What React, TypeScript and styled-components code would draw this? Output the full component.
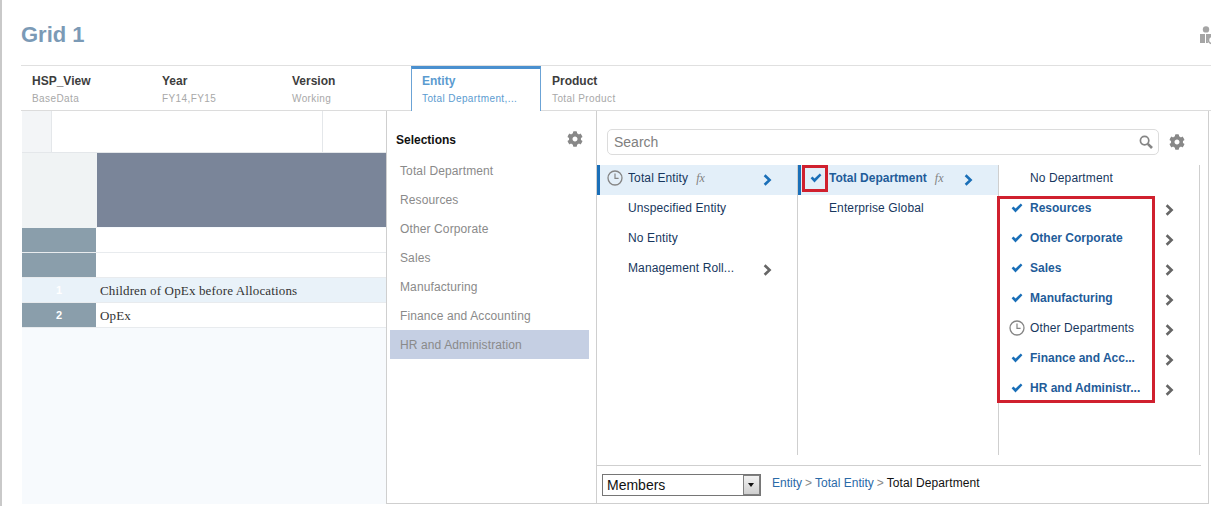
import React, { FC } from "react";
import { FaCog } from "react-icons/fa";
import styled, { createGlobalStyle } from "styled-components";

interface ITab {
  name: string;
  value: string;
  active?: boolean;
}

interface IMember {
  label: string;
  mark?: "check" | "clock";
  bold?: boolean;
  fx?: boolean;
  active?: boolean;
  more?: boolean;
  moreTone?: "blue" | "gray";
}

const tabs: ITab[] = [
  { name: "HSP_View", value: "BaseData" },
  { name: "Year", value: "FY14,FY15" },
  { name: "Version", value: "Working" },
  { name: "Entity", value: "Total Department,...", active: true },
  { name: "Product", value: "Total Product" },
];

const selections = [
  "Total Department",
  "Resources",
  "Other Corporate",
  "Sales",
  "Manufacturing",
  "Finance and Accounting",
  "HR and Administration",
];

const columns: IMember[][] = [
  [
    { label: "Total Entity", mark: "clock", fx: true, active: true, more: true, moreTone: "blue" },
    { label: "Unspecified Entity" },
    { label: "No Entity" },
    { label: "Management Roll...", more: true },
  ],
  [
    { label: "Total Department", mark: "check", bold: true, fx: true, active: true, more: true, moreTone: "blue" },
    { label: "Enterprise Global" },
  ],
  [
    { label: "No Department" },
    { label: "Resources", mark: "check", bold: true, more: true },
    { label: "Other Corporate", mark: "check", bold: true, more: true },
    { label: "Sales", mark: "check", bold: true, more: true },
    { label: "Manufacturing", mark: "check", bold: true, more: true },
    { label: "Other Departments", mark: "clock", more: true },
    { label: "Finance and Acc...", mark: "check", bold: true, more: true },
    { label: "HR and Administr...", mark: "check", bold: true, more: true },
  ],
];

const ClockIcon = () => (
  <svg width="16" height="16" viewBox="0 0 16 16" fill="none" stroke="#858585">
    <circle cx="8" cy="8" r="7" strokeWidth="1.3" />
    <path d="M8 3.6V8.4H11.6" strokeWidth="1.2" />
  </svg>
);

const CheckIcon = () => (
  <svg width="12" height="10" viewBox="0 0 12 10">
    <path d="M0.6 5.2L2.5 3.4L4.5 5.5L9.8 0.6L11.4 2.2L4.5 9.4Z" fill="#1a6fb8" />
  </svg>
);

const ChevronIcon: FC<{ tone: "blue" | "gray" }> = ({ tone }) => (
  <svg width="9" height="12" viewBox="0 0 9 12" fill="none">
    <path
      d="M1.6 1.2L6.6 6L1.6 10.8"
      stroke={tone === "blue" ? "#1a6fb8" : "#666"}
      strokeWidth="2.6"
    />
  </svg>
);

const SearchIcon = () => (
  <svg width="14" height="14" viewBox="0 0 14 14" fill="none" stroke="#858585">
    <circle cx="5.6" cy="5.6" r="4.2" strokeWidth="1.7" />
    <path d="M8.8 8.8L13 13" strokeWidth="2.6" />
  </svg>
);

const PersonIcon = () => (
  <svg width="16" height="20" viewBox="0 0 16 20" fill="#a5a5a5">
    <circle cx="6" cy="3.4" r="3.2" />
    <path d="M0 8H5V17H0Z" />
    <path d="M6 8H11V10.5C8.4 11.5 7.2 14 8 17H6Z" />
    <circle cx="12" cy="14" r="3.6" fill="none" stroke="#a5a5a5" strokeWidth="1.6" />
  </svg>
);

const MemberRow: FC<{ member: IMember }> = ({ member }) => (
  <Row $active={member.active}>
    <MarkCell>
      {member.mark === "check" && <CheckIcon />}
      {member.mark === "clock" && <ClockIcon />}
    </MarkCell>
    <RowLabel $bold={member.bold}>
      {member.label}
      {member.fx && <Fx>fx</Fx>}
    </RowLabel>
    {member.more && (
      <MoreCell>
        <ChevronIcon tone={member.moreTone ?? "gray"} />
      </MoreCell>
    )}
  </Row>
);

export default function App() {
  return (
    <>
      <GlobalStyle />
      <Page>
        <Header>
          <Title>Grid 1</Title>
          <PersonSlot>
            <PersonIcon />
          </PersonSlot>
        </Header>
        <TabBar>
          {tabs.map((tab) => (
            <Tab key={tab.name} $active={tab.active}>
              <TabName $active={tab.active}>{tab.name}</TabName>
              <TabValue $active={tab.active}>{tab.value}</TabValue>
            </Tab>
          ))}
        </TabBar>
        <Workspace>
          <GridArea>
            <TopRow>
              <CornerCell />
              <TopCell />
              <TopCell />
            </TopRow>
            <HeadRow>
              <HeadStub />
              <HeadBand />
            </HeadRow>
            <DataRow>
              <RowHead />
              <RowBody />
            </DataRow>
            <DataRow>
              <RowHead />
              <RowBody />
            </DataRow>
            <DataRow $tinted>
              <RowHead $tinted>1</RowHead>
              <RowBody>Children of OpEx before Allocations</RowBody>
            </DataRow>
            <DataRow>
              <RowHead>2</RowHead>
              <RowBody>OpEx</RowBody>
            </DataRow>
          </GridArea>
          <Panel>
            <SelectionColumn>
              <SelectionHead>
                <SelectionTitle>Selections</SelectionTitle>
                <FaCog size={16} color="#888" />
              </SelectionHead>
              {selections.map((name, index) => (
                <SelectionItem key={name} $current={index === selections.length - 1}>
                  {name}
                </SelectionItem>
              ))}
            </SelectionColumn>
            <BrowseColumn>
              <SearchRow>
                <SearchBox>
                  <SearchText>Search</SearchText>
                  <SearchIcon />
                </SearchBox>
                <FaCog size={16} color="#888" />
              </SearchRow>
              <MemberColumns>
                {columns.map((column, index) => (
                  <MemberColumn key={index}>
                    {column.map((member) => (
                      <MemberRow key={member.label} member={member} />
                    ))}
                  </MemberColumn>
                ))}
                <SmallHighlight />
                <BigHighlight />
              </MemberColumns>
              <Footer>
                <FakeSelect>
                  <FakeSelectText>Members</FakeSelectText>
                  <FakeSelectArrow />
                </FakeSelect>
                <Crumbs>
                  <Crumb>Entity</Crumb>
                  <CrumbSep>&gt;</CrumbSep>
                  <Crumb>Total Entity</Crumb>
                  <CrumbSep>&gt;</CrumbSep>
                  <CrumbLast>Total Department</CrumbLast>
                </Crumbs>
              </Footer>
            </BrowseColumn>
          </Panel>
        </Workspace>
      </Page>
    </>
  );
}

const GlobalStyle = createGlobalStyle`
  html, body {
    margin: 0;
    padding: 0;
    background: #fff;
    overflow: hidden;
  }

  * {
    box-sizing: border-box;
  }
`;

const Page = styled.div`
  width: 1211px;
  height: 506px;
  overflow: hidden;
  padding-left: 21px;
  background: #fff;
  font-family: "Liberation Sans", Arial, sans-serif;
  font-size: 12px;
  box-shadow: inset 2px 0 0 #c9c9c9;
`;

const Header = styled.div`
  height: 66px;
  display: flex;
  justify-content: space-between;
  padding-top: 22px;
  border-bottom: 1px solid #e0e0e0;
`;

const Title = styled.h1`
  margin: 0;
  font-size: 22px;
  line-height: 26px;
  font-weight: bold;
  color: #7b9ab6;
`;

const PersonSlot = styled.div`
  width: 11px;
  padding-top: 4px;
  overflow: hidden;
`;

const TabBar = styled.div`
  display: flex;
  height: 45px;
  border-bottom: 1px solid #dcdcdc;
`;

const Tab = styled.div<{ $active?: boolean }>`
  width: 130px;
  height: ${({ $active }) => ($active ? "45px" : "44px")};
  padding: ${({ $active }) => ($active ? "5px 10px 0" : "8px 11px 0")};
  background: #fff;
  ${({ $active }) =>
    $active &&
    `
    border-top: 3px solid #4a90cf;
    border-left: 1px solid #6ba3d6;
    border-right: 1px solid #6ba3d6;
  `}
`;

const TabName = styled.div<{ $active?: boolean }>`
  font-size: 12px;
  line-height: 14px;
  font-weight: bold;
  color: ${({ $active }) => ($active ? "#5b9bd0" : "#3d3d3d")};
`;

const TabValue = styled.div<{ $active?: boolean }>`
  margin-top: 5px;
  font-size: 10px;
  line-height: 12px;
  letter-spacing: 0.4px;
  color: ${({ $active }) => ($active ? "#5b9bd0" : "#a8a8a8")};
`;

const Workspace = styled.div`
  display: flex;
  height: 393px;
`;

const GridArea = styled.div`
  width: 364px;
  flex-shrink: 0;
  margin-left: 1px;
  background: #f7fafd;
`;

const TopRow = styled.div`
  display: flex;
  height: 42px;
  background: #fff;
  border-bottom: 1px solid #e4e7ea;
`;

const CornerCell = styled.div`
  width: 30px;
  background: #f3f5f7;
  border-right: 1px solid #e4e7ea;
`;

const TopCell = styled.div`
  width: 271px;
  border-right: 1px solid #e4e7ea;

  & + & {
    flex: 1;
    border-right: none;
  }
`;

const HeadRow = styled.div`
  display: flex;
  height: 75px;
`;

const HeadStub = styled.div`
  width: 75px;
  background: #f0f3f4;
`;

const HeadBand = styled.div`
  flex: 1;
  background: #7a8599;
  margin-bottom: 1px;
`;

const DataRow = styled.div<{ $tinted?: boolean }>`
  display: flex;
  height: 25px;
  background: ${({ $tinted }) => ($tinted ? "#e9f2f9" : "#fff")};
  border-bottom: 1px solid #e8ebee;
`;

const RowHead = styled.div<{ $tinted?: boolean }>`
  width: 74px;
  margin-right: 1px;
  display: flex;
  align-items: center;
  justify-content: center;
  font-size: 11px;
  font-weight: bold;
  color: #fff;
  background: ${({ $tinted }) => ($tinted ? "#e9f2f9" : "#8a9eab")};
`;

const RowBody = styled.div`
  flex: 1;
  padding: 2px 3px 0;
  font-family: "Liberation Serif", "Times New Roman", serif;
  font-size: 13px;
  line-height: 22px;
  letter-spacing: 0.15px;
  color: #333;
`;

const Panel = styled.div`
  width: 823px;
  height: 393px;
  display: flex;
  background: #fff;
  border: 1px solid #cfcfcf;
  border-top: none;
`;

const SelectionColumn = styled.div`
  width: 210px;
  flex-shrink: 0;
  border-right: 1px solid #cfcfcf;
  padding: 0 7px 0 3px;
`;

const SelectionHead = styled.div`
  height: 45px;
  padding: 20px 6px 0 6px;
  display: flex;
  justify-content: space-between;
  align-items: flex-start;
`;

const SelectionTitle = styled.div`
  font-weight: bold;
  font-size: 12px;
  line-height: 18px;
  color: #111;
`;

const SelectionItem = styled.div<{ $current?: boolean }>`
  height: 29px;
  line-height: 31px;
  padding-left: 10px;
  font-size: 12px;
  letter-spacing: 0.12px;
  color: #8a8a8a;
  background: ${({ $current }) => ($current ? "#c5cfe3" : "transparent")};
`;

const BrowseColumn = styled.div`
  flex: 1;
  display: flex;
  flex-direction: column;
  min-width: 0;
`;

const SearchRow = styled.div`
  height: 54px;
  padding: 18px 23px 0 10px;
  display: flex;
  gap: 10px;
  align-items: flex-start;

  & > svg {
    margin-top: 5px;
  }
`;

const SearchBox = styled.div`
  width: 552px;
  height: 26px;
  display: flex;
  align-items: center;
  justify-content: space-between;
  padding: 0 5px 0 6px;
  border: 1px solid #dcdcdc;
  border-radius: 5px;
`;

const SearchText = styled.span`
  font-size: 14px;
  color: #808080;
`;

const MemberColumns = styled.div`
  position: relative;
  display: flex;
  height: 290px;
  width: 603px;
`;

const MemberColumn = styled.div`
  width: 201px;
  border-right: 1px solid #cfcfcf;
`;

const Row = styled.div<{ $active?: boolean }>`
  height: 30px;
  width: 200px;
  display: grid;
  grid-template-columns: 31px 132px 14px;
  align-items: center;
  background: ${({ $active }) => ($active ? "#e3eff9" : "transparent")};
  box-shadow: ${({ $active }) => ($active ? "inset 3px 0 0 #1a6fb8" : "none")};
`;

const MarkCell = styled.div`
  display: flex;
  justify-content: center;
  padding-left: 5px;
  padding-bottom: 4px;
`;

const RowLabel = styled.div<{ $bold?: boolean }>`
  padding-bottom: 4px;
  font-size: 12px;
  font-weight: ${({ $bold }) => ($bold ? "bold" : "normal")};
  letter-spacing: ${({ $bold }) => ($bold ? "0" : "0.12px")};
  color: ${({ $bold }) => ($bold ? "#1f5c99" : "#17375e")};
  white-space: nowrap;
  overflow: hidden;
`;

const Fx = styled.span`
  margin-left: 8px;
  font-family: "Liberation Serif", serif;
  font-style: italic;
  font-weight: normal;
  font-size: 12px;
  color: #808080;
`;

const MoreCell = styled.div`
  display: flex;
  justify-content: center;
`;

const SmallHighlight = styled.div`
  position: absolute;
  left: 205px;
  top: 0;
  width: 26px;
  height: 27px;
  border: 3px solid #d0202e;
`;

const BigHighlight = styled.div`
  position: absolute;
  left: 400px;
  top: 31px;
  width: 158px;
  height: 207px;
  border: 3px solid #d0202e;
`;

const Footer = styled.div`
  margin-top: 10px;
  width: 604px;
  height: 38px;
  border-top: 1px solid #cfcfcf;
  display: flex;
  align-items: center;
  padding: 0 0 0 5px;
  gap: 11px;
`;

const FakeSelect = styled.div`
  width: 159px;
  height: 22px;
  display: flex;
  border: 1px solid #767676;
`;

const FakeSelectText = styled.div`
  flex: 1;
  padding-left: 4px;
  font-size: 14px;
  line-height: 21px;
  color: #111;
`;

const FakeSelectArrow = styled.div`
  position: relative;
  width: 17px;
  border: 1px solid #808080;
  background: linear-gradient(#f2f2f2, #cfcfcf);

  &::after {
    content: "";
    position: absolute;
    left: 4px;
    top: 7px;
    border-left: 3.5px solid transparent;
    border-right: 3.5px solid transparent;
    border-top: 4px solid #111;
  }
`;

const Crumbs = styled.div`
  display: flex;
  gap: 3px;
  font-size: 12px;
  margin-top: -3px;
`;

const Crumb = styled.span`
  color: #2a6aa8;
`;

const CrumbSep = styled.span`
  color: #888;
`;

const CrumbLast = styled.span`
  letter-spacing: 0.1px;
  color: #111;
`;
